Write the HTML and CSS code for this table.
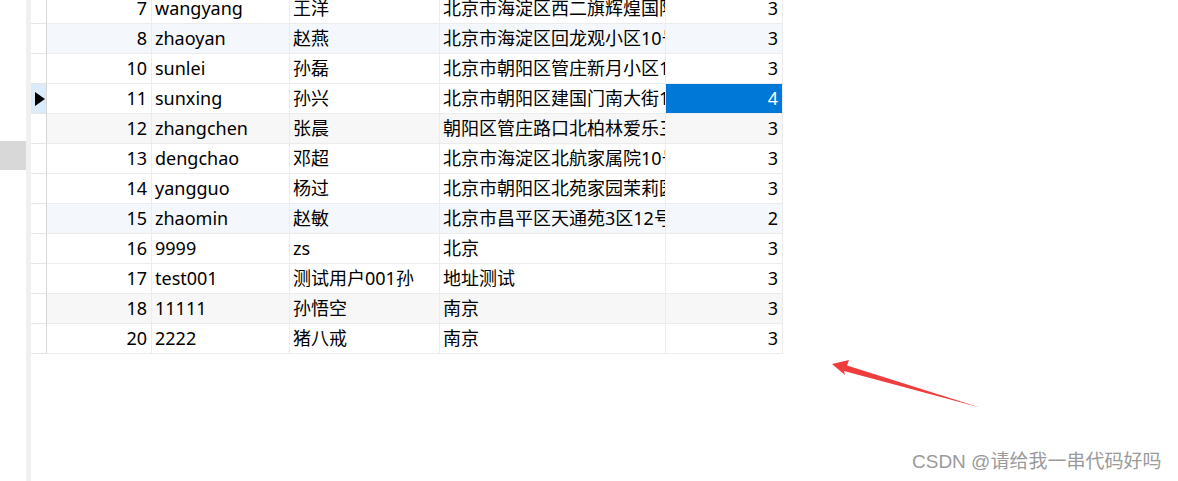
FILE: index.html
```html
<!DOCTYPE html>
<html>
<head>
<meta charset="utf-8">
<link rel="stylesheet" href="styles.css">
</head>
<body>
<div class="page">
  <div class="left"><div class="left-block"></div></div>
  <div class="band"></div>
  <div class="main">
    <div class="grid">
      <div class="row"><div class="g"></div><div class="c n">7</div><div class="c">wangyang</div><div class="c">王洋</div><div class="c">北京市海淀区西二旗辉煌国际</div><div class="c n">3</div></div>
      <div class="row blue"><div class="g"></div><div class="c n">8</div><div class="c">zhaoyan</div><div class="c">赵燕</div><div class="c">北京市海淀区回龙观小区10号</div><div class="c n">3</div></div>
      <div class="row"><div class="g"></div><div class="c n">10</div><div class="c">sunlei</div><div class="c">孙磊</div><div class="c">北京市朝阳区管庄新月小区12号</div><div class="c n">3</div></div>
      <div class="row"><div class="g cur"><span class="tri"></span></div><div class="c n">11</div><div class="c">sunxing</div><div class="c">孙兴</div><div class="c">北京市朝阳区建国门南大街10号</div><div class="c n sel">4</div></div>
      <div class="row gray"><div class="g"></div><div class="c n">12</div><div class="c">zhangchen</div><div class="c">张晨</div><div class="c">朝阳区管庄路口北柏林爱乐三期</div><div class="c n">3</div></div>
      <div class="row"><div class="g"></div><div class="c n">13</div><div class="c">dengchao</div><div class="c">邓超</div><div class="c">北京市海淀区北航家属院10号</div><div class="c n">3</div></div>
      <div class="row"><div class="g"></div><div class="c n">14</div><div class="c">yangguo</div><div class="c">杨过</div><div class="c">北京市朝阳区北苑家园茉莉园</div><div class="c n">3</div></div>
      <div class="row blue"><div class="g"></div><div class="c n">15</div><div class="c">zhaomin</div><div class="c">赵敏</div><div class="c">北京市昌平区天通苑3区12号</div><div class="c n">2</div></div>
      <div class="row"><div class="g"></div><div class="c n">16</div><div class="c">9999</div><div class="c">zs</div><div class="c">北京</div><div class="c n">3</div></div>
      <div class="row"><div class="g"></div><div class="c n">17</div><div class="c">test001</div><div class="c">测试用户001孙</div><div class="c">地址测试</div><div class="c n">3</div></div>
      <div class="row gray"><div class="g"></div><div class="c n">18</div><div class="c">11111</div><div class="c">孙悟空</div><div class="c">南京</div><div class="c n">3</div></div>
      <div class="row"><div class="g"></div><div class="c n">20</div><div class="c">2222</div><div class="c">猪八戒</div><div class="c">南京</div><div class="c n">3</div></div>
    </div>
  </div>
</div>
<svg class="arrow" width="1178" height="481" viewBox="0 0 1178 481">
  <polygon points="832,364 849,360 847,365.5 980,407.5 844,371 845,375" fill="#f03c3c"/>
</svg>
<div class="wm">CSDN @请给我一串代码好吗</div>
</body>
</html>
```
FILE: styles.css
```css
html, body {
  margin: 0;
  padding: 0;
  background: #fff;
  width: 1178px;
  height: 481px;
  overflow: hidden;
}
.page {
  display: flex;
  height: 481px;
  font-family: "Noto Sans", "Noto Sans CJK SC", sans-serif;
  font-size: 18px;
  color: #000;
}
.left {
  width: 26px;
  flex: none;
}
.left-block {
  margin-top: 141px;
  height: 29px;
  background: #d8d8d8;
}
.band {
  width: 5px;
  flex: none;
  background: #f0f0f0;
}
.main {
  flex: none;
}
.grid {
  margin-top: -6px;
  width: 752px;
}
.row {
  display: grid;
  grid-template-columns: 16px 105px 138px 150px 226px 117px;
  height: 30px;
}
.row > div {
  box-sizing: border-box;
  border-bottom: 1px solid #ececec;
  border-right: 1px solid #ececec;
  overflow: hidden;
  white-space: nowrap;
}
.row > .g {
  border-right: 1px solid #d6d6d6;
  border-bottom: 1px solid #e6e6e6;
  background: #fff;
  display: flex;
  align-items: center;
  justify-content: center;
}
.row > .g.cur {
  background: #dcebfa;
}
.tri {
  width: 0;
  height: 0;
  border-top: 7px solid transparent;
  border-bottom: 7px solid transparent;
  border-left: 10px solid #000;
  margin-left: 2px;
}
.c {
  line-height: 29px;
  padding: 0 3px;
}
.c.n {
  text-align: right;
  padding-right: 4px;
}
.blue > .c { background: #f4f8fd; }
.gray > .c { background: #f7f7f7; }
.c.sel {
  background: #0078d7;
  color: #fff;
}
.arrow {
  position: absolute;
  left: 0;
  top: 0;
  pointer-events: none;
}
.wm {
  position: absolute;
  left: 912px;
  top: 450px;
  font-family: "Liberation Sans", "Noto Sans CJK SC", sans-serif;
  font-size: 19px;
  color: #9a9a9a;
  line-height: 24px;
}
```
